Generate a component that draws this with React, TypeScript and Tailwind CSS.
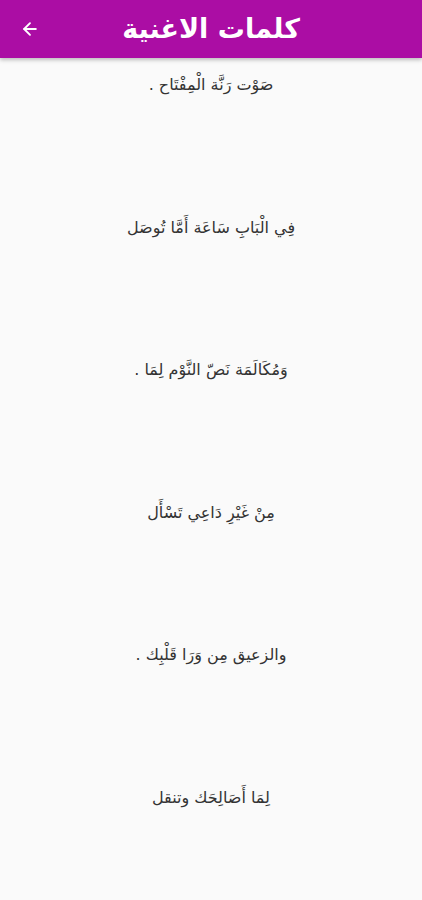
import { ArrowLeft } from "lucide-react";

const lines = [
  "صَوْت رَنَّة الْمِفْتَاح .",
  "فِي الْبَابِ سَاعَة أَمَّا تُوصَل",
  "وَمُكَالَمَة نَصّ النَّوْم لِمَا .",
  "مِنْ غَيْرِ دَاعِي تَسْأَل",
  "والزعيق مِن وَرَا قَلْبِك .",
  "لِمَا أَصَالِحَك وتنقل",
];

export default function App() {
  return (
    <div
      className="min-h-[900px] bg-[#fafafa]"
      style={{ fontFamily: '"DejaVu Sans", "Noto Sans", sans-serif' }}
    >
      <header className="relative h-[58px] bg-[#ab0da4] flex items-center justify-center shadow-[0_2px_4px_rgba(0,0,0,0.25)]">
        <button className="absolute left-[20px] top-1/2 -translate-y-1/2 text-white">
          <ArrowLeft className="w-5 h-5" strokeWidth={2.25} />
        </button>
        <h1 dir="rtl" className="text-white text-[27px] font-bold leading-none -mt-[2px]">
          كلمات الاغنية
        </h1>
      </header>

      <div className="flex flex-col items-center gap-[118.5px] pt-[15px]">
        {lines.map((line, i) => (
          <p
            key={i}
            dir="rtl"
            className="text-[16px] leading-[24px] text-[#333333] text-center"
          >
            {line}
          </p>
        ))}
      </div>
    </div>
  );
}
